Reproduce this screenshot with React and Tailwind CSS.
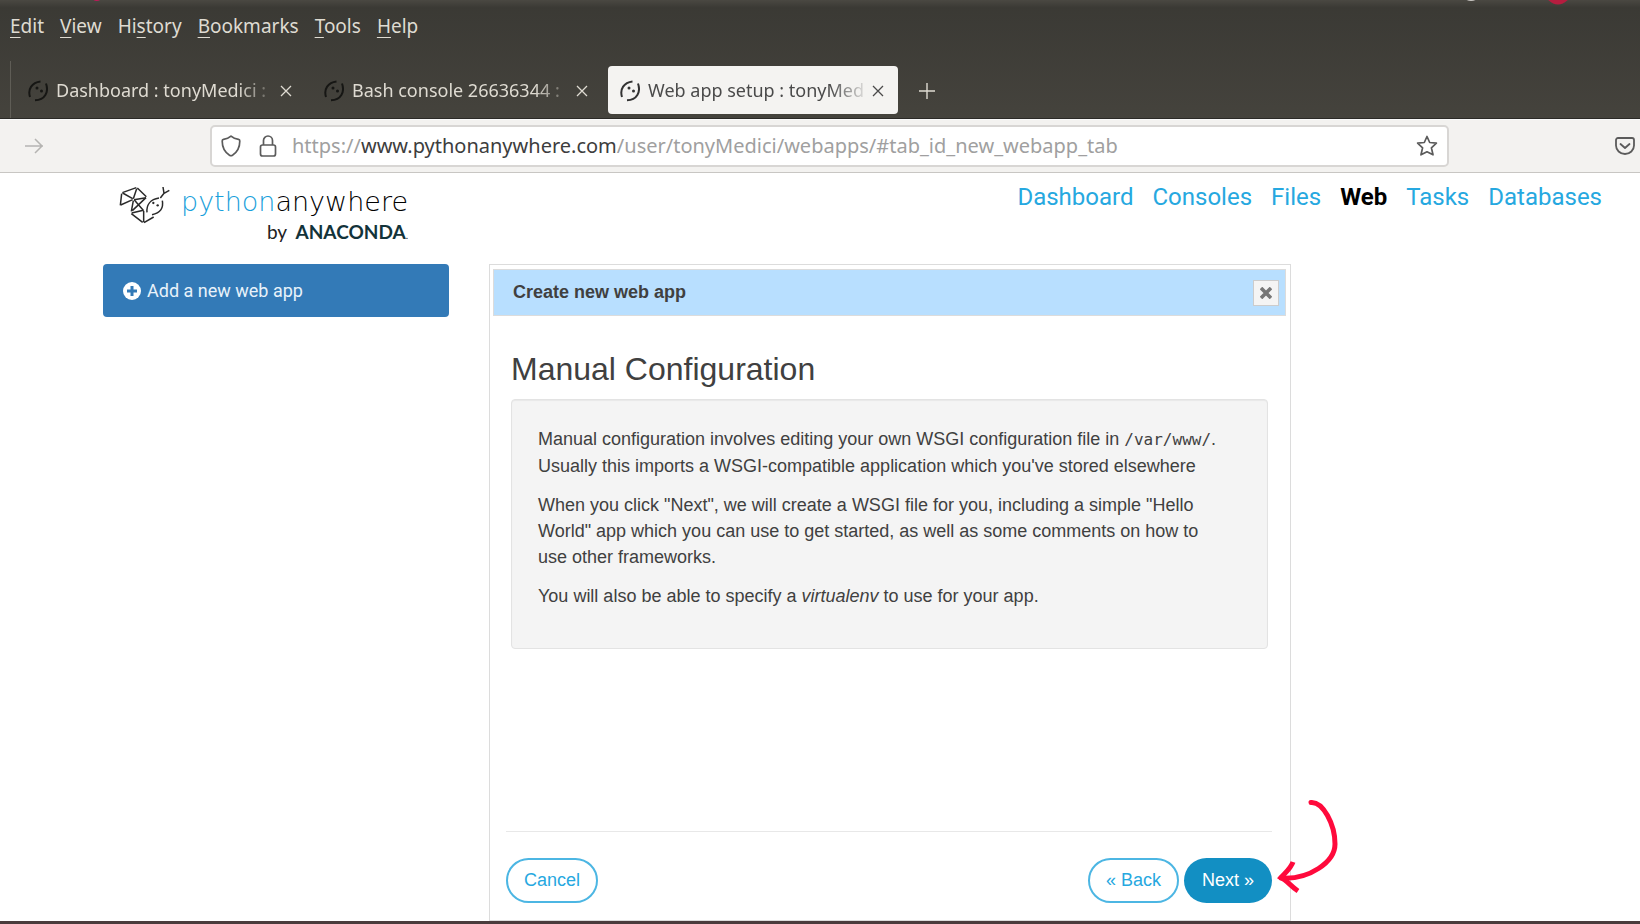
const MENU = [
    { key: 'E', before: '', after: 'dit' },
    { key: 'V', before: '', after: 'iew' },
    { key: 's', before: 'Hi', after: 'tory' },
    { key: 'B', before: '', after: 'ookmarks' },
    { key: 'T', before: '', after: 'ools' },
    { key: 'H', before: '', after: 'elp' },
]

const TABS = [
    { title: 'Dashboard : tonyMedici :', active: false },
    { title: 'Bash console 26636344 :', active: false },
    { title: 'Web app setup : tonyMed', active: true },
]

const NAV = ['Dashboard', 'Consoles', 'Files', 'Web', 'Tasks', 'Databases']

const SnakeIcon = ({ className }) => (
    <svg viewBox="0 0 20 22" className={className} fill="none" stroke="currentColor" strokeWidth="2">
        <path d="M2 17C-.5 9 4 2.500 12.500 1.500" />
        <path d="M18 3.500C21 12 17 20 7 20.300" />
        <circle cx="9" cy="8" r="1.5" fill="currentColor" stroke="none" />
        <circle cx="13.500" cy="11" r="1.5" fill="currentColor" stroke="none" />
    </svg>
)

const CrossIcon = ({ className }) => (
    <svg viewBox="0 0 12 12" className={className} fill="none" stroke="currentColor" strokeWidth="1.3">
        <path d="M1 1l10 10M11 1L1 11" />
    </svg>
)

// Lower edge of the desktop panel that shows above the browser menu
const DesktopStrip = () => (
    <svg className="h-2 w-full bg-linear-to-b from-[#4a4842] to-[#3a3934]">
        <circle cx="5.900%" cy="-5" r="6" fill="#c2185b" />
        <circle cx="89.700%" cy="-9" r="10" fill="#c9c7c3" />
        <circle cx="95%" cy="-8" r="12.500" fill="#b51d3f" />
    </svg>
)

const MenuBar = () => (
    <div className="flex h-11 gap-4 px-[10px] text-[19px] leading-9">
        {MENU.map(({ key, before, after }) => (
            <button key={key} type="button" className="h-9">
                {before}
                <span className="underline underline-offset-4">{key}</span>
                {after}
            </button>
        ))}
    </div>
)

const Tab = ({ title, active }) => (
    <div
        className={
            active
                ? 'flex h-12 w-[290px] items-center rounded bg-[#f4f3f1] px-3 pt-[2px] text-[#4a4a4a]'
                : 'flex h-12 w-[290px] items-center px-3 pt-[2px] text-[#dfdbd2]'
        }
    >
        <SnakeIcon className={active ? 'h-[22px] w-5 text-[#333]' : 'h-[22px] w-5 text-[#161614]'} />
        <button
            type="button"
            className="ml-2 min-w-0 flex-1 text-left text-[18px] whitespace-nowrap [mask-image:linear-gradient(to_right,black_82%,transparent)]"
        >
            {title}
        </button>
        <button type="button" aria-label="Close tab" className="px-[2px]">
            <CrossIcon className="size-3" />
        </button>
    </div>
)

const Toolbar = () => (
    <div className="flex h-[54px] items-center border-y border-t-[#fafafa] border-b-[#c8c6c3] bg-[#f3f2f0]">
        <button type="button" aria-label="Forward" disabled className="ml-6 text-[#b5b4b2]">
            <svg viewBox="0 0 20 18" className="h-[18px] w-5" fill="none" stroke="currentColor" strokeWidth="1.5">
                <path d="M1 9h18M11 2l7 7-7 7" />
            </svg>
        </button>
        <div className="mr-[166px] ml-[166px] flex h-[42px] flex-1 items-center rounded-[5px] border-2 border-[#d8d6d4] bg-white px-[9px] text-[#5b5b5b]">
            <svg viewBox="0 0 20 22" className="h-[22px] w-5" fill="none" stroke="currentColor" strokeWidth="1.7" strokeLinejoin="round">
                <path d="M10 1.200C8 3 5.500 4 2.500 4.300 1.600 4.400 1.200 5 1.200 6c0 6.500 2.300 11 7.300 14.200 1 .6 2 .6 3 0C16.500 17 18.800 12.500 18.800 6c0-1-.4-1.600-1.300-1.700C14.500 4 12 3 10 1.200z" />
            </svg>
            <svg viewBox="0 0 18 22" className="ml-[18px] h-[22px] w-[18px]" fill="none" stroke="currentColor" strokeWidth="1.7">
                <rect x="1.500" y="10" width="15" height="11" rx="2" />
                <path d="M4.500 10V5.500a4.500 4.500 0 0 1 9 0V10" />
            </svg>
            <div className="ml-[15px] flex-1 text-[20px] whitespace-nowrap text-[#a09fa0]">
                https://<span className="text-[#3d3d3d]">www.pythonanywhere.com</span>
                /user/tonyMedici/webapps/#tab_id_new_webapp_tab
            </div>
            <button type="button" aria-label="Bookmark this page">
                <svg viewBox="0 0 22 22" className="size-[22px]" fill="none" stroke="currentColor" strokeWidth="1.7" strokeLinejoin="round">
                    <path d="M11 1.500l2.700 6 6.700.700-5 4.600 1.600 7L11 16.800l-6 3 1.600-7-5-4.600 6.700-.7z" />
                </svg>
            </button>
        </div>
        <button type="button" aria-label="Save to Pocket" className="mr-[5px] text-[#5b5b5b]">
            <svg viewBox="0 0 20 18" className="h-[18px] w-5" fill="none" stroke="currentColor" strokeWidth="1.8" strokeLinecap="round" strokeLinejoin="round">
                <path d="M3 1h14a2 2 0 0 1 2 2v5.500a9 8.500 0 0 1-18 0V3a2 2 0 0 1 2-2z" />
                <path d="M5.500 7l4.500 4 4.500-4" />
            </svg>
        </button>
    </div>
)

const Logo = () => (
    <a href="#" className="flex">
        <svg viewBox="27 15 156 120" className="mt-[2px] h-10 w-[52px]" fill="none" stroke="#2a2a2a" strokeWidth="4.500">
            <path d="M37 38l42-15M82 24l27 26M108 53l-36 6M68 56L38 39M80 26l-10 30M35 41l-4 35M32 75l36-16" />
            <path d="M70 62l-6 32M67 92l41-39M73 60l28 32M100 91l-35 8M64 101l34 26M101 93v34M102 128l29-17" />
            <path d="M111 97c-2-22 10-39 36-43M157 62c4 22-6 38-31 42" />
            <path d="M151 54l11-14-3-19M162 40l16-9" />
            <circle cx="130" cy="69" r="3.500" fill="#2a2a2a" stroke="none" />
            <circle cx="143" cy="76" r="3.500" fill="#2a2a2a" stroke="none" />
        </svg>
        <span className="ml-[10px] flex flex-col items-end">
            <span className="font-['DejaVu_Sans'] text-[27px] leading-[38px] font-extralight text-black">
                <span className="text-[#1a9fdb]">python</span>anywhere
            </span>
            <span className="font-['Lato'] text-[19px] leading-[22px] text-[#222]">
                by <span className="ml-1 font-bold text-[#13333a]">ANACONDA</span>
                <span className="text-[10px]">.</span>
            </span>
        </span>
    </a>
)

const WebAppDialog = () => (
    <section className="flex flex-col border border-[#dcdcdc] p-1 pb-4 pl-[3px] font-['Liberation_Sans',Arial,sans-serif] text-[#404040]">
        <header className="flex h-[47px] items-center justify-between border border-[#dcdcdc] bg-[#b8dfff] pr-[6px] pl-[19px]">
            <h2 className="text-[18px] font-bold">Create new web app</h2>
            <button
                type="button"
                aria-label="Close"
                className="flex size-[26px] items-center justify-center border border-[#ccc] bg-[#f4f4f4] text-[#777]"
            >
                <svg viewBox="0 0 12 12" className="size-3" stroke="currentColor" strokeWidth="3.600">
                    <path d="M1 1l10 10M11 1L1 11" />
                </svg>
            </button>
        </header>
        <div className="px-[18px] pt-[33px]">
            <h1 className="text-[32px] leading-10">Manual Configuration</h1>
            <div className="mt-[10px] flex min-h-[250px] flex-col gap-[13px] rounded border border-[#e3e3e3] bg-[#f4f4f4] pt-[26px] pr-9 pl-[26px] text-[18px] leading-[26px] shadow-[inset_0_1px_1px_rgba(0,0,0,0.05)]">
                <p>
                    Manual configuration involves editing your own WSGI configuration file in{' '}
                    <code className="font-['DejaVu_Sans_Mono',monospace] text-[16px]">/var/www/</code>. Usually this
                    imports a WSGI-compatible application which you&apos;ve stored elsewhere
                </p>
                <p>
                    When you click &quot;Next&quot;, we will create a WSGI file for you, including a simple
                    &quot;Hello World&quot; app which you can use to get started, as well as some comments on how to
                    use other frameworks.
                </p>
                <p>
                    You will also be able to specify a <em>virtualenv</em> to use for your app.
                </p>
            </div>
        </div>
        <footer className="mr-[14px] ml-[13px] mt-[182px] flex items-center gap-[5px] border-t border-[#e8e8e8] pt-[26px] text-[18px]">
            <button type="button" className="mr-auto h-[45px] rounded-full border-2 border-[#4cb6e3] px-4 text-[#26a8e0]">
                Cancel
            </button>
            <button type="button" className="h-[45px] rounded-full border-2 border-[#4cb6e3] px-4 text-[#26a8e0]">
                « Back
            </button>
            <div className="relative">
                <button type="button" className="h-[45px] rounded-full bg-[#128fc3] px-[18px] text-white">
                    Next »
                </button>
                <svg
                    viewBox="0 0 62 96"
                    className="absolute bottom-2 left-full ml-[5px] h-24 w-[62px]"
                    fill="none"
                    stroke="#ff0a3c"
                    strokeWidth="5"
                >
                    <path d="M34 3.500c12-1 24 22 24 41.500 0 18-26 36-54 34" strokeLinecap="round" />
                    <path d="M16 63c-2 6-7 10-12 15.500 6 3 10 9 17 13.500" />
                </svg>
            </div>
        </footer>
    </section>
)

const App = () => {
    return (
        <div className="flex min-h-screen flex-col bg-white font-['Noto_Sans',sans-serif]">
            <div className="bg-linear-to-b from-[#3a3934] to-[#45433d] text-[#dfdbd2]">
                <DesktopStrip />
                <MenuBar />
                <div className="flex h-[67px] items-end border-b border-[#2b2a27]">
                    <div className="ml-[10px] flex h-[57px] flex-1 items-center gap-[6px] border-l border-[#5f5d56] pl-[5px]">
                        {TABS.map((tab) => (
                            <Tab key={tab.title} title={tab.title} active={tab.active} />
                        ))}
                        <button type="button" aria-label="New tab" className="ml-[15px] pt-[2px]">
                            <svg viewBox="0 0 16 16" className="size-4" stroke="currentColor" strokeWidth="1.4">
                                <path d="M8 0v16M0 8h16" />
                            </svg>
                        </button>
                    </div>
                </div>
            </div>
            <Toolbar />
            <div className="flex items-start justify-between pt-[10px] pr-[38px] pl-[119px]">
                <Logo />
                <nav className="flex gap-[19px] font-['Roboto'] text-[24px] leading-7">
                    {NAV.map((item) => (
                        <a key={item} href="#" className={item === 'Web' ? 'font-bold text-black' : 'text-[#26a8e0]'}>
                            {item}
                        </a>
                    ))}
                </nav>
            </div>
            <main className="mt-[18px] grid flex-1 grid-cols-[346fr_802fr_309fr] gap-10 pl-[103px]">
                <div>
                    <button
                        type="button"
                        className="flex h-[53px] w-full items-center gap-[6px] rounded bg-[#337ab7] px-5 font-['Roboto'] text-[18px] text-[#e8f2fa]"
                    >
                        <svg viewBox="0 0 18 18" className="size-[18px]">
                            <circle cx="9" cy="9" r="9" fill="white" />
                            <path d="M9 4v10M4 9h10" stroke="#337ab7" strokeWidth="3" />
                        </svg>
                        Add a new web app
                    </button>
                </div>
                <WebAppDialog />
            </main>
            <div className="h-[3px] bg-[#4a3b3c]" />
        </div>
    )
}

export default App
